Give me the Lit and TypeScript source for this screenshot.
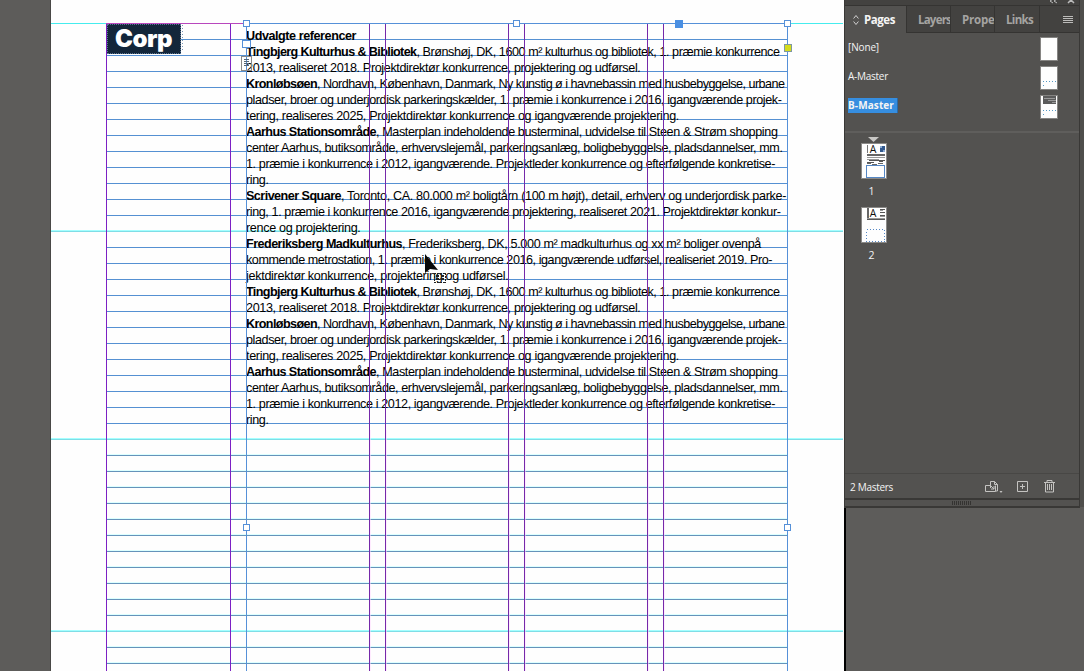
import { LitElement, html, css, svg, nothing } from "lit";
import { customElement } from "lit/decorators.js";

type Line = { b?: string; bw?: number; t?: string; w: number };

const LINES: Line[] = [
  { b: "Udvalgte referencer", bw: 110, w: 110 },
  { b: "Tingbjerg Kulturhus & Bibliotek", bw: 170.5, t: ", Brønshøj, DK, 1600 m² kulturhus og bibliotek, 1. præmie konkurrence", w: 533.5 },
  { t: "2013, realiseret 2018. Projektdirektør konkurrence, projektering og udførsel.", w: 394.5 },
  { b: "Kronløbsøen", bw: 71, t: ", Nordhavn, København, Danmark, Ny kunstig ø i havnebassin med husbebyggelse, urbane", w: 538.5 },
  { t: "pladser, broer og underjordisk parkeringskælder, 1. præmie i konkurrence i 2016, igangværende projek-", w: 535.5 },
  { t: "tering, realiseres 2025, Projektdirektør konkurrence og igangværende projektering.", w: 433 },
  { b: "Aarhus Stationsområde", bw: 130, t: ", Masterplan indeholdende busterminal, udvidelse til Steen & Strøm shopping", w: 531.5 },
  { t: "center Aarhus, butiksområde, erhvervslejemål, parkeringsanlæg, boligbebyggelse, pladsdannelser, mm.", w: 536.5 },
  { t: "1. præmie i konkurrence i 2012, igangværende. Projektleder konkurrence og efterfølgende konkretise-", w: 529 },
  { t: "ring.", w: 22.5 },
  { b: "Scrivener Square", bw: 95, t: ", Toronto, CA. 80.000 m² boligtårn (100 m højt), detail, erhverv og underjordisk parke-", w: 540 },
  { t: "ring, 1. præmie i konkurrence 2016, igangværende projektering, realiseret 2021. Projektdirektør konkur-", w: 534.5 },
  { t: "rence og projektering.", w: 114.5 },
  { b: "Frederiksberg Madkulturhus", bw: 156, t: ", Frederiksberg, DK, 5.000 m² madkulturhus og xx m² boliger ovenpå", w: 515 },
  { t: "kommende metrostation, 1. præmie i konkurrence 2016, igangværende udførsel, realiseriet 2019. Pro-", w: 526 },
  { t: "jektdirektør konkurrence, projektering og udførsel.", w: 262.5 },
];
const ALL_LINES = [...LINES, ...LINES.slice(1, 10)];

const BASELINES = Array.from({ length: 40 }, (_, i) => 39 + i * 16);
const CYAN = [231, 439, 631];
const COLUMNS = [369, 385, 508, 524, 647, 663];

@customElement("app-root")
export class AppRoot extends LitElement {
  static styles = css`
    :host { display: block; width: 1084px; height: 671px; overflow: hidden; font-family: "Open Sans", "Noto Sans", sans-serif; }
    * { box-sizing: border-box; }
    .workspace { display: flex; height: 100%; background: #5d5c5a; padding-left: 50px; position: relative; }
    .page { width: 794px; height: 671px; background: #fefefe; border-left: 1px solid #494846; position: relative; }
    .side { width: 240px; height: 671px; border-left: 2px solid #000; }
    .layer { position: absolute; left: 0; top: 0; pointer-events: none; }
    .logo { position: absolute; left: 56px; top: 24px; width: 74px; height: 30px; background: #13263a; color: #fff; font: 900 24px/28px "Inter", sans-serif; padding-left: 7px; border: 1px dotted #587493; white-space: nowrap; }
    .copy { position: absolute; left: 195px; top: 28px; width: 542px; color: #000; font: 12.6px/16px "Liberation Sans", sans-serif; }
    .line { height: 16px; white-space: pre; display: flex; }
    .line b { font-weight: 700; }
    .panel { position: absolute; left: 844px; top: 0; width: 236px; height: 508px; background: #535250; border: solid #393836; border-width: 0 1px 2px; display: flex; flex-direction: column; color: #f4f4f4; font-size: 11px; }
    .gutter { position: absolute; left: 1080px; top: 0; width: 4px; height: 507px; background: #4f4e4c; }
    .grip { height: 6px; background: #434240; border-bottom: 1px solid #353432; display: flex; justify-content: flex-end; }
    .tabs { height: 27px; display: flex; background: #434240; color: #a5a4a2; font-weight: 700; font-size: 11.5px; line-height: 28px; }
    .tab { border-right: 1px solid #353432; border-bottom: 1px solid #353432; padding-left: 11px; overflow: hidden; white-space: nowrap; }
    .tab.on { background: #535250; border-bottom: 0; color: #f5f5f5; width: 62px; padding-left: 8px; display: flex; align-items: center; gap: 5px; }
    .t2 { width: 44px; } .t3 { width: 44px; } .t4 { width: 45px; }
    .t5 { flex: 1; border-right: 0; padding: 9px 0 0 22px; line-height: 0; }
    .masters { height: 98px; padding-top: 1px; }
    .master { height: 29px; display: flex; align-items: center; justify-content: space-between; padding: 0 21px 0 3px; font-size: 10px; }
    .name { line-height: 15px; margin-top: -2px; }
    .name.on { background: #368ee0; font-weight: 700; padding: 0 3px 0 0; border-right: 1px solid #2a6aa8; }
    .thumb { display: block; }
    .rule { height: 2px; background: #5f5e5c; flex: none; }
    .pages { flex: 1; padding: 4px 0 0 16px; display: flex; flex-direction: column; }
    .pg { width: 26px; display: flex; flex-direction: column; align-items: center; height: 64px; font-size: 10.5px; }
    .pg svg { flex: none; }
    .num { line-height: 14px; margin: 5px 5px 0 0; }
    .foot { height: 25px; border-top: 1px solid #484745; display: flex; align-items: center; padding: 2px 20px 0 5px; font-size: 10px; }
    .label { flex: 1; }
    .resize { height: 8px; border-top: 2px solid #393836; display: flex; justify-content: center; flex: none; }
  `;

  firstUpdated() {
    this.fit();
    document.fonts?.ready.then(() => this.fit());
  }

  private fit() {
    this.renderRoot.querySelectorAll<HTMLElement>("[data-w]").forEach((el) => {
      el.style.letterSpacing = "0px";
      const natural = el.getBoundingClientRect().width;
      const n = (el.textContent ?? "").length;
      if (n) el.style.letterSpacing = (Number(el.dataset.w) - natural) / n + "px";
    });
  }

  private handle(x: number, y: number, fill = "#fff") {
    return svg`<rect x=${x - 2.5} y=${y - 2.5} width="6" height="6" fill=${fill} stroke="#5590d8"/>`;
  }

  private grid() {
    return html`<svg class="layer" width="793" height="671" viewBox="51 0 793 671" shape-rendering="crispEdges">
      <path d="M51 23.5H106M788 23.5H843" stroke="#45ecee"/>
      ${BASELINES.filter((y) => !CYAN.includes(y)).map((y) => svg`
        <rect x="106" y=${y} width="682" height="1" fill=${y > 430 ? "#6593ba" : "#5590d2"}/>
        ${y > 430 ? svg`<rect x="106" y=${y - 1} width="682" height="1" fill="#dcffff"/>` : nothing}`)}
      ${CYAN.map((y) => svg`<rect x="51" y=${y} width="792" height="1" fill="#7fdde6"/><rect x="51" y=${y - 1} width="792" height="1" fill="#a4ffff"/>`)}
    </svg>`;
  }

  private guides() {
    return html`<svg class="layer" width="793" height="671" viewBox="51 0 793 671" shape-rendering="crispEdges">
      <path d="M106 23.5H246" stroke="#b847bd"/>
      <path d="M106.5 24V671M230.5 24V671" stroke="#7c20c4"/>
      ${COLUMNS.map((x) => svg`<rect x=${x} y="24" width="1" height="647" fill="#7529aa"/><rect x=${x + 1} y="430" width="1" height="241" fill="#ffd8ff" opacity=".5"/>`)}
      <path d="M182.5 25V52" stroke="#7894b5" stroke-dasharray="1 2"/>
      <path d="M246.5 671V23.5H787.5V671" stroke="#5590d8" fill="none"/>
      <rect x="242.500" y="40.500" width="8" height="7" fill="#fff" stroke="#5590d8"/>
      <path d="M241.500 56.500h10v14h-10z" stroke="#8a8a8a" fill="none"/>
      <path d="M244 59.500h5M244 61.500h5M244 63.500h5M244 65.500h5" stroke="#567"/>
      ${this.handle(246, 23)}${this.handle(516, 23)}${this.handle(787, 23)}${this.handle(246, 527)}${this.handle(787, 527)}
      <rect x="675" y="20" width="8" height="8" fill="#4a8fe2"/>
      <rect x="784.500" y="44.500" width="7" height="7" fill="#d5dc1c" stroke="#7f98a0"/>
      <path d="M425 254V273L430 269L438 270Z" fill="#080808" shape-rendering="auto"/>
      <path d="M434 273.500h12M434 282.500h12M434.500 273v10M445.500 273v10" stroke="#222" stroke-width="1.600" stroke-dasharray="2 1"/>
      <path d="M436 276h3M436 279h3M441 276h3M441 279h3" stroke="#222" stroke-width="2"/>
    </svg>`;
  }

  private masterThumb(kind: number) {
    return html`<svg class="thumb" width="18" height="24" shape-rendering="crispEdges">
      <rect x=".5" y=".5" width="17" height="23" fill="#fefefe" stroke="#858482"/>
      ${kind ? svg`<path d="M3 15.500h13" stroke="#5599c4" stroke-dasharray="1 2"/><path d="M3 19.500h1" stroke="#5599c4"/>` : nothing}
      ${kind === 2 ? svg`<rect x="3" y="1" width="13" height="8" fill="#5b5b5b"/><path d="M4 3.500h11M8 5.500h8M12 7.500h4" stroke="#999"/>` : nothing}
    </svg>`;
  }

  private pageThumb(n: number) {
    return html`<svg width="26" height="36" shape-rendering="crispEdges">
      <rect x=".5" y=".5" width="25" height="35" fill="#fefefe" stroke="#8b8a88"/>
      ${n === 1
        ? svg`<path d="M6.500 2v8" stroke="#777"/><path d="M6 12h18" stroke="#666" stroke-width="2"/><path d="M6 14.500h18M6 16.500h12" stroke="#999"/><path d="M8 17.500h16M6 19.500h7M18 18.500h4" stroke="#555"/><path d="M6 20.500h4M11 21.500h5M17 20.500h5" stroke="#666"/><rect x="19" y="3" width="5" height="6" fill="#32598e"/><path d="M19 3h2v2h-2zM22 7h2v2h-2z" fill="#89aad3"/><rect x="5.500" y="22.500" width="18" height="12" fill="#fff" stroke="#5587c5"/>`
        : svg`<path d="M7 1v12" stroke="#666" stroke-width="2"/><path d="M19 2.500h5M19 5.500h5M19 8.500h5M6 12.500h18" stroke="#555"/><path d="M19 3.500h3M19 9.500h5M6 11.500h18" stroke="#999"/><rect x="5.500" y="22.500" width="18" height="12" fill="none" stroke="#5587c5" stroke-dasharray="1 2"/>`}
      <rect x="8" y="1" width="11" height="10" fill="#fff"/>
      <text x="8.700" y="10" font-size="10.500" font-family="Open Sans" fill="#111">A</text>
    </svg>`;
  }

  render() {
    return html`<div class="workspace">
      <main class="page">
        ${this.grid()}
        <div class="logo"><span data-w="57">Corp</span></div>
        <div class="copy">
          ${ALL_LINES.map((l) => html`<div class="line">${l.b ? html`<b data-w=${l.bw!}>${l.b}</b>` : nothing}${l.t ? html`<span data-w=${l.w - (l.bw ?? 0)}>${l.t}</span>` : nothing}</div>`)}
        </div>
        ${this.guides()}
      </main>
      <div class="side"></div>
      <div class="gutter"></div>
      <aside class="panel">
        <div class="grip"><svg width="34" height="5"><path d="M8-1L5 1l3 2M12-1L9 1l3 2" stroke="#bbb" fill="none"/><path d="M23 3l3-3 3 3" stroke="#bbb" stroke-width="1.500" fill="none"/></svg></div>
        <div class="tabs">
          <div class="tab on"><svg width="6" height="12" viewBox="0 0 6 12"><path d="M.6 4.500L3 1.500l2.400 3M.6 7.500L3 10.500l2.400-3" fill="none" stroke="#d0d0d0"/></svg><span data-w="31">Pages</span></div>
          <div class="tab t2"><span data-w="33">Layers</span></div>
          <div class="tab t3"><span data-w="32.5">Prope</span></div>
          <div class="tab t4"><span data-w="27">Links</span></div>
          <div class="tab t5"><svg width="12" height="9" shape-rendering="crispEdges"><path d="M1 1.500h10M1 3.500h10M1 5.500h10M1 7.500h10" stroke="#bdbcba"/></svg></div>
        </div>
        <div class="masters">
          <div class="master"><span class="name"><span data-w="31">[None]</span></span>${this.masterThumb(0)}</div>
          <div class="master"><span class="name"><span data-w="40">A-Master</span></span>${this.masterThumb(1)}</div>
          <div class="master"><span class="name on"><span data-w="46">B-Master</span></span>${this.masterThumb(2)}</div>
        </div>
        <div class="rule"></div>
        <div class="pages">
          <div class="pg"><svg width="26" height="6"><path d="M7 0H18L12.500 5Z" fill="#c8c7c5"/></svg>${this.pageThumb(1)}<span class="num">1</span></div>
          <div class="pg"><svg width="26" height="6"></svg>${this.pageThumb(2)}<span class="num">2</span></div>
        </div>
        <div class="foot"><div class="label"><span data-w="43">2 Masters</span></div>
          <svg width="75" height="16" viewBox="0 0 75 16" fill="none" stroke="#c4c3c1">
            <path d="M6.500 6.500H1.500v6h10v-6M6.500 9V2.500h4l3 3v6.500h-2M10.500 2.500v3h3M6 6l4 4M10 7v3H7"/><path d="M15.500 12h3l-1.500 2z" fill="#c4c3c1" stroke="none"/>
            <path d="M33.500 2.500h10v10h-10zM38.500 5v5M36 7.500h5"/>
            <path d="M60 3.500h11M63 3V1.500h5V3M61.500 4v9h8V4M63.500 5v6M65.500 5v6M67.500 5v6"/>
          </svg>
        </div>
        <div class="resize"><svg width="20" height="5" shape-rendering="crispEdges"><path d="M0 2.500h20" stroke="#343331" stroke-width="4" stroke-dasharray="1 1"/></svg></div>
      </aside>
    </div>`;
  }
}
